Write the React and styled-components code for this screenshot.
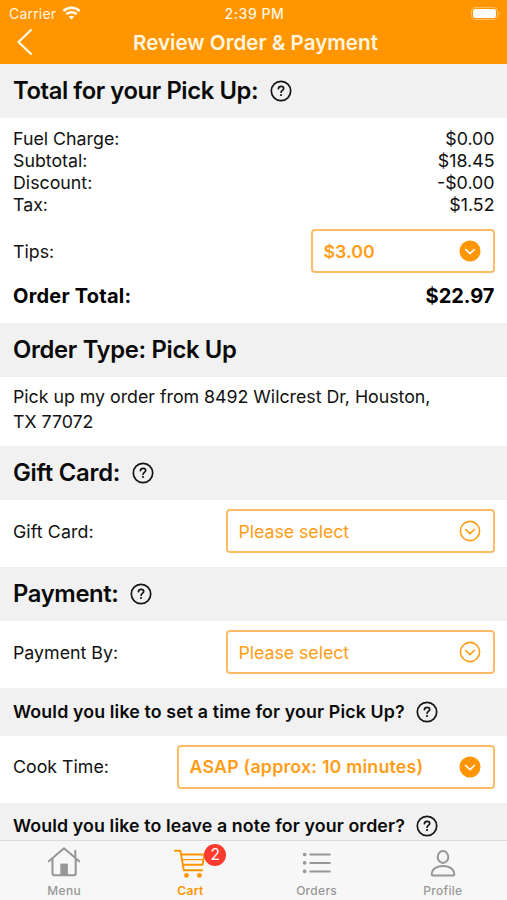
import React from "react";
import styled, { createGlobalStyle } from "styled-components";

const GlobalStyle = createGlobalStyle`
  * {
    box-sizing: border-box;
  }
  body {
    margin: 0;
    font-family: "Inter", "Liberation Sans", sans-serif;
    color: #111;
    background: #fff;
  }
`;

const Screen = styled.div`
  width: 507px;
  height: 900px;
  display: flex;
  flex-direction: column;
  overflow: hidden;
`;

const Header = styled.header`
  height: 64px;
  flex: none;
  background: #ff9500;
  color: #fff6e0;
`;

const StatusBar = styled.div`
  height: 26px;
  padding: 0 7px 0 9px;
  display: grid;
  grid-template-columns: 1fr auto 1fr;
  align-items: center;
  font-size: 14px;
`;

const Carrier = styled.div`
  display: flex;
  align-items: center;
  gap: 6px;
  letter-spacing: 0.2px;
`;

const Clock = styled.div`
  font-weight: 500;
  letter-spacing: 0.55px;
`;

const StatusIcon = styled.svg`
  display: block;
  justify-self: end;
`;

const NavBar = styled.div`
  height: 32px;
  padding: 0 16px;
  display: grid;
  grid-template-columns: 40px 1fr 36px;
  align-items: center;
`;

const NavTitle = styled.h1`
  margin: 0;
  text-align: center;
  font-size: 20.6px;
  font-weight: 600;
`;

const Content = styled.main`
  flex: 1;
  min-height: 0;
  overflow: hidden;
`;

const SectionHeader = styled.div`
  height: ${(p) => (p.$small ? 47.5 : 54)}px;
  padding: 0 13px;
  display: flex;
  align-items: center;
  gap: 11.5px;
  background: #f1f1f1;
`;

const SectionTitle = styled.h2`
  margin: 0;
  padding-bottom: 1px;
  font-size: ${(p) => (p.$small ? 17.8 : 23.8)}px;
  font-weight: 600;
  letter-spacing: ${(p) => p.$tracking || 0}px;
  white-space: nowrap;
  color: #0a0a0a;
`;

const Charges = styled.div`
  padding: 9px 12.5px 14px 13px;
`;

const Line = styled.div`
  height: 22px;
  display: flex;
  align-items: center;
  justify-content: space-between;
  font-size: 17.8px;
`;

const Row = styled.div`
  height: ${(p) => (p.$tight ? 44 : 67)}px;
  padding: 0 12px ${(p) => (p.$tight ? 0 : 5)}px 13px;
  display: flex;
  align-items: center;
  justify-content: space-between;
  font-size: 17.8px;
`;

const Total = styled.div`
  height: 50px;
  padding: 0 12.5px 5px 13px;
  display: flex;
  align-items: center;
  justify-content: space-between;
  font-size: 20px;
  font-weight: 700;
  color: #000;
`;

const Label = styled.span`
  letter-spacing: ${(p) => p.$tracking || 0}px;
`;

const Address = styled.p`
  margin: 0;
  height: 69px;
  padding: 8px 60px 0 13px;
  font-size: 17.8px;
  line-height: 24.5px;
  letter-spacing: -0.02px;
  white-space: nowrap;
`;

const SelectBox = styled.div`
  width: ${(p) => p.$width}px;
  height: 44px;
  padding: 0 12px 0 10.5px;
  display: flex;
  align-items: center;
  justify-content: space-between;
  border: 2px solid #fdbd66;
  border-radius: 4px;
  color: #ff9d18;
  font-weight: ${(p) => (p.$filled ? 600 : 400)};
`;

const TabBar = styled.nav`
  height: 60px;
  flex: none;
  display: grid;
  grid-template-columns: repeat(4, 1fr);
  padding: 0 1px;
  background: #f7f7f7;
  border-top: 1px solid #dadada;
`;

const TabItem = styled.div`
  position: relative;
  padding-top: 4px;
  display: flex;
  flex-direction: column;
  align-items: center;
  gap: 2px;
  color: ${(p) => (p.$active ? "#ff9500" : "#979797")};
  font-size: 12px;
  font-weight: ${(p) => (p.$active ? 600 : 500)};
  line-height: 15px;
  letter-spacing: 0.3px;
`;

const Badge = styled.span`
  position: absolute;
  top: 3px;
  left: 77px;
  width: 22px;
  height: 22px;
  border-radius: 50%;
  background: #ff3b30;
  color: #fff;
  font-size: 15.5px;
  font-weight: 400;
  line-height: 22px;
  letter-spacing: 0;
  text-align: center;
`;

const WifiIcon = () => (
  <StatusIcon width="19" height="14" viewBox="0 0 19 14" fill="none" stroke="#fffaf0">
    <path d="M1.3 5C6 .7 13 .7 17.7 5" strokeWidth="2.5" />
    <path d="M4.3 8.200c3-2.600 7.400-2.600 10.400 0" strokeWidth="2.400" />
    <path d="M6.700 10.700c1.700-1.400 3.900-1.400 5.600 0L9.500 13.600z" fill="#fffaf0" stroke="none" />
  </StatusIcon>
);

const BatteryIcon = () => (
  <StatusIcon width="29" height="13" viewBox="0 0 29 13">
    <rect x="0.5" y="0.5" width="26" height="12" rx="3.600" fill="none" stroke="#ffbd60" />
    <rect x="2" y="2" width="23" height="9" rx="2.200" fill="#fff" />
    <path d="M27.500 4.500v4q1.500-.6 1.500-2t-1.500-2z" fill="#ffbd60" />
  </StatusIcon>
);

const BackIcon = () => (
  <svg width="18" height="28" viewBox="0 0 18 28" fill="none" stroke="#fff6e0" strokeWidth="2.400" strokeLinecap="round" strokeLinejoin="round">
    <path d="M15 2 2.500 14 15 26" />
  </svg>
);

const HelpIcon = () => (
  <svg width="22" height="22" viewBox="0 0 22 22" fill="none" stroke="#151515">
    <circle cx="11" cy="11" r="9.700" strokeWidth="1.700" />
    <path d="M8.400 8.700c.1-1.500 1.200-2.300 2.700-2.300s2.600.8 2.600 2.100c0 1.800-2.600 1.900-2.600 3.700" strokeWidth="1.700" strokeLinecap="round" />
    <circle cx="11" cy="15" r="1.100" fill="#151515" stroke="none" />
  </svg>
);

const ChevronIcon = ({ filled }) => (
  <svg width="22" height="22" viewBox="0 0 22 22" fill="none">
    <circle cx="11" cy="11" r={filled ? 10.5 : 9.6} fill={filled ? "#ff9500" : "none"} stroke={filled ? "none" : "#ff9d18"} strokeWidth="1.600" />
    <path d="m6.600 9.500 4.400 4.200 4.400-4.200" stroke={filled ? "#fff" : "#ff9d18"} strokeWidth="1.700" strokeLinecap="round" strokeLinejoin="round" />
  </svg>
);

const HomeIcon = () => (
  <svg width="36" height="36" viewBox="0 0 36 36" fill="none" stroke="currentColor" strokeWidth="2.100" strokeLinecap="round" strokeLinejoin="round">
    <path d="M2.800 16.300 18 3.300l15.200 13" />
    <path d="M6.500 14v14.200q0 2.100 2.100 2.100h19q2.100 0 2.100-2.100V14M29.300 12V5.800" />
    <path d="M14.300 30.300V18.600h7.600v11.700z" fill="currentColor" stroke="none" />
  </svg>
);

const CartIcon = () => (
  <svg width="36" height="36" viewBox="0 0 36 36" fill="none" stroke="currentColor" strokeWidth="1.900" strokeLinecap="round" strokeLinejoin="round">
    <path d="M2.900 5.700h5.500l3.400 19.500h18.400" />
    <path d="M9.200 9.500h23.500l-2.200 10.200H11" />
    <path d="M10.200 14.600h21" strokeWidth="1.200" />
    <circle cx="14.500" cy="30.400" r="2.400" fill="currentColor" stroke="none" />
    <circle cx="27.400" cy="30.400" r="2.400" fill="currentColor" stroke="none" />
  </svg>
);

const ListIcon = () => (
  <svg width="36" height="36" viewBox="0 0 36 36" fill="none" stroke="currentColor" strokeLinecap="round">
    <path d="M11.300 9.500h19.500M11.300 17.900h19.500M11.300 26.400h19.500" strokeWidth="2" />
    <path d="M5.600 9.500h.1M5.600 17.900h.1M5.600 26.400h.1" strokeWidth="3.600" />
  </svg>
);

const ProfileIcon = () => (
  <svg width="36" height="36" viewBox="0 0 36 36" fill="none" stroke="currentColor" strokeWidth="2" strokeLinejoin="round">
    <ellipse cx="18" cy="12" rx="5.300" ry="5.900" />
    <path d="M6.700 29.800C6.600 23.600 12 21 18 21s11.400 2.600 11.300 8.800q0 .8-1 .8H7.700q-1 0-1-.8z" />
  </svg>
);

const charges = [
  { label: "Fuel Charge:", amount: "$0.00" },
  { label: "Subtotal:", amount: "$18.45" },
  { label: "Discount:", amount: "-$0.00" },
  { label: "Tax:", amount: "$1.52" },
];

const tabs = [
  { name: "Menu", Icon: HomeIcon },
  { name: "Cart", Icon: CartIcon, active: true, badge: 2 },
  { name: "Orders", Icon: ListIcon },
  { name: "Profile", Icon: ProfileIcon },
];

const Section = ({ title, small, help = true, tracking }) => (
  <SectionHeader $small={small}>
    <SectionTitle $small={small} $tracking={tracking}>
      {title}
    </SectionTitle>
    {help && <HelpIcon />}
  </SectionHeader>
);

const Select = ({ value, width, filled, tracking }) => (
  <SelectBox $width={width} $filled={filled}>
    <Label $tracking={tracking}>{value}</Label>
    <ChevronIcon filled={filled} />
  </SelectBox>
);

const App = () => (
  <>
    <GlobalStyle />
    <Screen>
      <Header>
        <StatusBar>
          <Carrier>
            Carrier <WifiIcon />
          </Carrier>
          <Clock>2:39 PM</Clock>
          <BatteryIcon />
        </StatusBar>
        <NavBar>
          <BackIcon />
          <NavTitle>Review Order &amp; Payment</NavTitle>
        </NavBar>
      </Header>
      <Content>
        <Section title="Total for your Pick Up:" tracking={-0.4} />
        <Charges>
          {charges.map(({ label, amount }) => (
            <Line key={label}>
              <Label>{label}</Label>
              <Label>{amount}</Label>
            </Line>
          ))}
        </Charges>
        <Row $tight>
          <Label>Tips:</Label>
          <Select value="$3.00" width={184} filled />
        </Row>
        <Total>
          <Label $tracking={0.22}>Order Total:</Label>
          <Label>$22.97</Label>
        </Total>
        <Section title="Order Type: Pick Up" help={false} tracking={-0.32} />
        <Address>
          Pick up my order from 8492 Wilcrest Dr, Houston,
          <br />
          TX 77072
        </Address>
        <Section title="Gift Card:" tracking={-0.22} />
        <Row>
          <Label $tracking={0.1}>Gift Card:</Label>
          <Select value="Please select" width={269} tracking={-0.06} />
        </Row>
        <Section title="Payment:" tracking={-0.36} />
        <Row>
          <Label>Payment By:</Label>
          <Select value="Please select" width={269} tracking={-0.06} />
        </Row>
        <Section title="Would you like to set a time for your Pick Up?" small tracking={0.13} />
        <Row>
          <Label>Cook Time:</Label>
          <Select value="ASAP (approx: 10 minutes)" width={318} filled tracking={0.21} />
        </Row>
        <Section title="Would you like to leave a note for your order?" small tracking={0.11} />
      </Content>
      <TabBar>
        {tabs.map(({ name, Icon, active, badge }) => (
          <TabItem key={name} $active={active}>
            <Icon />
            {badge && <Badge>{badge}</Badge>}
            {name}
          </TabItem>
        ))}
      </TabBar>
    </Screen>
  </>
);

export default App;
